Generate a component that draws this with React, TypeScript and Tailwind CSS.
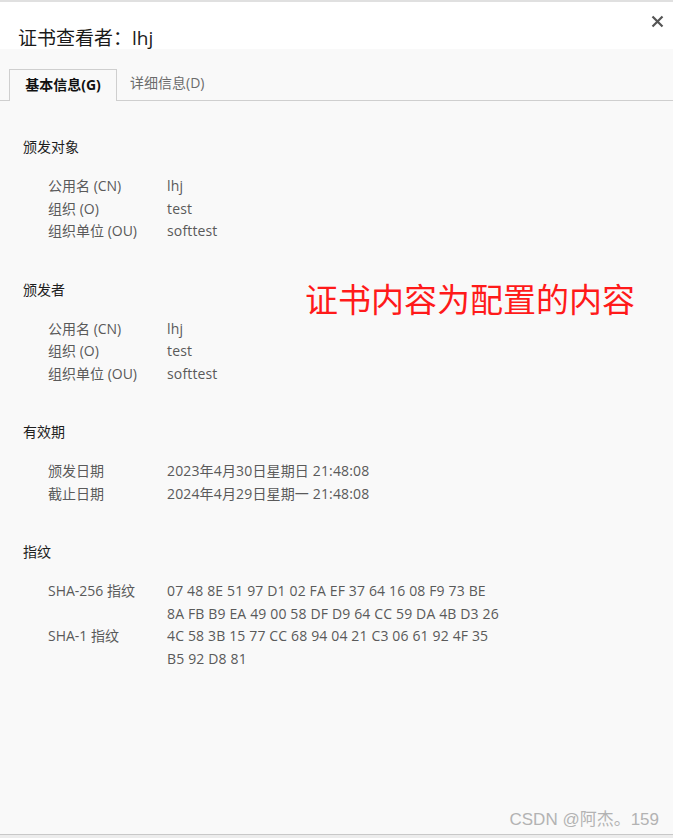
const font = 'font-["Open_Sans","Noto_Sans_CJK_SC",sans-serif]';

type Row = { label: string; value: string[] };

const sections: { title: string; rows: Row[] }[] = [
  {
    title: '颁发对象',
    rows: [
      { label: '公用名 (CN)', value: ['lhj'] },
      { label: '组织 (O)', value: ['test'] },
      { label: '组织单位 (OU)', value: ['softtest'] },
    ],
  },
  {
    title: '颁发者',
    rows: [
      { label: '公用名 (CN)', value: ['lhj'] },
      { label: '组织 (O)', value: ['test'] },
      { label: '组织单位 (OU)', value: ['softtest'] },
    ],
  },
  {
    title: '有效期',
    rows: [
      { label: '颁发日期', value: ['2023年4月30日星期日 21:48:08'] },
      { label: '截止日期', value: ['2024年4月29日星期一 21:48:08'] },
    ],
  },
  {
    title: '指纹',
    rows: [
      {
        label: 'SHA-256 指纹',
        value: ['07 48 8E 51 97 D1 02 FA EF 37 64 16 08 F9 73 BE', '8A FB B9 EA 49 00 58 DF D9 64 CC 59 DA 4B D3 26'],
      },
      {
        label: 'SHA-1 指纹',
        value: ['4C 58 3B 15 77 CC 68 94 04 21 C3 06 61 92 4F 35', 'B5 92 D8 81'],
      },
    ],
  },
];

export default function App() {
  return (
    <div className={`${font} relative w-[673px] h-[838px] flex flex-col bg-[#f9f9f9] border-t-2 border-[#e0e0e0] overflow-hidden`}>
      {/* header */}
      <div className="relative h-[47px] bg-white shrink-0">
        <h1 className="pl-[18px] pt-[23px] text-[19px] leading-[26px] text-[#1a1a1a]">证书查看者：lhj</h1>
        <button className="absolute right-[9px] top-[12px] w-[14px] h-[14px] flex items-center justify-center text-[#555]">
          <svg width="13" height="13" viewBox="0 0 13 13" fill="none" stroke="currentColor" strokeWidth="2.2">
            <path d="M1.5 1.5 L11.5 11.5 M11.5 1.5 L1.5 11.5" />
          </svg>
        </button>
      </div>

      {/* tabs */}
      <div className="flex items-end px-[9px] pt-[19px] border-b border-[#cfcfcf] shrink-0">
        <div className="h-[32px] w-[108px] -mb-px pb-[3px] border border-b-0 border-[#cfcfcf] bg-[#f9f9f9] flex items-center justify-center text-[14px] font-bold text-[#111]">
          基本信息(G)
        </div>
        <div className="h-[32px] pl-[13px] pb-[3px] flex items-center text-[14px] text-[#6b6b6b]">详细信息(D)</div>
      </div>

      {/* content */}
      <div className="flex-1 pl-[23px] pt-[35px] flex flex-col gap-[36px]">
        {sections.map((s) => (
          <div key={s.title}>
            <div className="text-[14px] leading-[22px] text-[#1e1e1e]">{s.title}</div>
            <div className="mt-[17px] pl-[25px] grid grid-cols-[120px_1fr] text-[14px] leading-[22.5px] text-[#5a5a5a]">
              {s.rows.map((r) => (
                <div key={r.label} className="contents">
                  <div>{r.label}</div>
                  <div className="-ml-[1px] tracking-[0.15px]">
                    {r.value.map((v) => (
                      <div key={v}>{v}</div>
                    ))}
                  </div>
                </div>
              ))}
            </div>
          </div>
        ))}
      </div>

      {/* annotation */}
      <div className="absolute left-[305px] top-[276px] text-[33px] leading-[40px] text-[#ff1a1a] font-['Noto_Sans_CJK_SC',sans-serif]">
        证书内容为配置的内容
      </div>

      {/* watermark */}
      <div className="absolute right-[14px] bottom-[6px] text-[17px] leading-[24px] text-[#b3b3b3] font-['Liberation_Sans','Noto_Sans_CJK_SC',sans-serif]">
        CSDN @阿杰。159
      </div>

      <div className="h-[4px] shrink-0 border-t border-[#c8c8c8] bg-[#ececec]" />
    </div>
  );
}
